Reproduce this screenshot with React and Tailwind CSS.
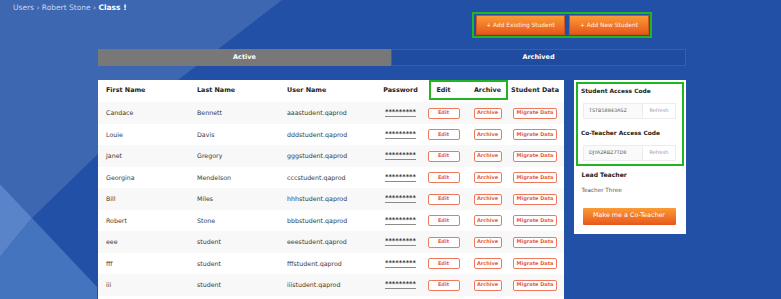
import React from "react"

const students = [
  ["Candace", "Bennett", "aaastudent.qaprod"],
  ["Louie", "Davis", "dddstudent.qaprod"],
  ["Janet", "Gregory", "gggstudent.qaprod"],
  ["Georgina", "Mendelson", "cccstudent.qaprod"],
  ["Bill", "Miles", "hhhstudent.qaprod"],
  ["Robert", "Stone", "bbbstudent.qaprod"],
  ["eee", "student", "eeestudent.qaprod"],
  ["fff", "student", "fffstudent.qaprod"],
  ["iii", "student", "iiistudent.qaprod"],
]

const cols = "grid grid-cols-[91px_90px_91px_45px_41px_47px_48px] items-center pl-[8px]"

function OrangeBtn({ className, children }) {
  return (
    <div
      className={
        "flex items-center justify-center border border-[#c9561c] bg-gradient-to-b from-[#fa9a35] to-[#e8551a] text-[5.9px] text-[#fff2e6] " +
        className
      }
    >
      {children}
    </div>
  )
}

function RowBtn({ w, children }) {
  return (
    <div
      className={
        "flex h-[11px] items-center justify-center rounded-[2px] border border-[#ec7a5e] bg-white text-[5px] font-bold text-[#e5603e] " +
        w
      }
    >
      {children}
    </div>
  )
}

function CodeBox({ code, className }) {
  return (
    <div className={"ml-[2px] flex h-[16px] w-[93px] border border-[#ececec] " + className}>
      <div className="flex flex-1 items-center bg-[#fafafa] pl-[5px] text-[4.9px] text-[#555]">{code}</div>
      <div className="flex w-[33px] items-center justify-center border-l border-[#ececec] bg-white text-[5px] text-[#999]">
        Refresh
      </div>
    </div>
  )
}

export default function App() {
  return (
    <div className="relative h-[299px] w-[781px] overflow-hidden bg-[#2150a6] font-['DejaVu_Sans',sans-serif]">
      <svg className="absolute inset-0" width="781" height="299" viewBox="0 0 781 299">
        <polygon points="0,0 282,0 178,80 100,152 32,218 0,184" fill="#3d67b0" />
        <polygon points="0,184 32,218 0,257" fill="#5a84c9" />
        <polygon points="0,257 32,218 97,287 97,299 0,299" fill="#4574be" />
      </svg>

      <div className="relative">
        <div className="h-[12px] pl-[13px] pt-[3px] text-[7.5px] leading-[9px] text-[#c9d6ee]">
          Users › Robert Stone › <span className="font-bold text-white">Class !</span>
        </div>

        <div className="ml-[472px] flex h-[26px] w-[180px] gap-[4px] border-2 border-[#22b522] py-[1px] pl-[2px] pr-[1px]">
          <OrangeBtn className="w-[89px]">+ Add Existing Student</OrangeBtn>
          <OrangeBtn className="w-[80px]">+ Add New Student</OrangeBtn>
        </div>

        <div className="ml-[98px] mt-[11px] flex h-[17px] w-[588px] text-[6.5px] font-bold text-white">
          <div className="flex w-[293px] items-center justify-center bg-[#787878]">Active</div>
          <div className="flex flex-1 items-center justify-center border border-[#3560ad] bg-[#1f4c9f]">Archived</div>
        </div>

        <div className="ml-[98px] mt-[14px] flex items-start gap-[10px]">
          {/* students table */}
          <div className="w-[466px] bg-white pb-[20px]">
            <div className={"relative h-[22px] text-[6.4px] font-bold text-[#222] " + cols}>
              <div>First Name</div>
              <div>Last Name</div>
              <div>User Name</div>
              <div className="text-center">Password</div>
              <div className="text-center">Edit</div>
              <div className="text-center">Archive</div>
              <div className="text-center">Student Data</div>
              <div className="absolute left-[331px] top-0 h-[20px] w-[79px] border-2 border-[#22b522]" />
            </div>
            {students.map(([first, last, user], i) => (
              <div
                key={user}
                className={
                  "text-[6.3px] text-[#3a3a3a] " +
                  cols +
                  (i % 2 === 0 ? " h-[22px] bg-[#f8f8f9]" : " h-[21px] bg-white")
                }
              >
                <div>{first}</div>
                <div>{last}</div>
                <div>{user}</div>
                <div className="flex justify-center">
                  <span className="border-b border-[#8a8a8a] text-[6.6px] font-bold leading-[7px] text-[#333]">*********</span>
                </div>
                <div className="flex justify-center">
                  <RowBtn w="w-[32px]">Edit</RowBtn>
                </div>
                <div className="flex justify-center">
                  <RowBtn w="w-[28px]">Archive</RowBtn>
                </div>
                <div className="flex justify-center">
                  <RowBtn w="w-[44px]">Migrate Data</RowBtn>
                </div>
              </div>
            ))}
          </div>

          {/* access codes panel */}
          <div className="w-[112px] bg-white p-[2px] pb-[9px]">
            <div className="border-2 border-[#22b522] px-[3px] pb-[3px] pt-[3px]">
              <div className="text-[5.9px] font-bold leading-[9px] text-[#222]">Student Access Code</div>
              <CodeBox code="TSTB58843ASZ" className="mt-[7px]" />
              <div className="mt-[10px] text-[5.9px] font-bold leading-[9px] text-[#222]">Co-Teacher Access Code</div>
              <CodeBox code="DJYA2RBZ7TD8" className="mt-[7px]" />
            </div>
            <div className="px-[5.5px]">
              <div className="mt-[4px] text-[6.1px] font-bold leading-[9px] text-[#222]">Lead Teacher</div>
              <div className="mt-[6.5px] text-[5.7px] leading-[9px] text-[#555]">Teacher Three</div>
              <div className="ml-[1px] mt-[13px] flex h-[17px] w-[93px] items-center justify-center rounded-[1px] bg-gradient-to-b from-[#fa9a35] to-[#e8551a] text-[6.4px] text-white">
                Make me a Co-Teacher
              </div>
            </div>
          </div>
        </div>
      </div>
    </div>
  )
}
